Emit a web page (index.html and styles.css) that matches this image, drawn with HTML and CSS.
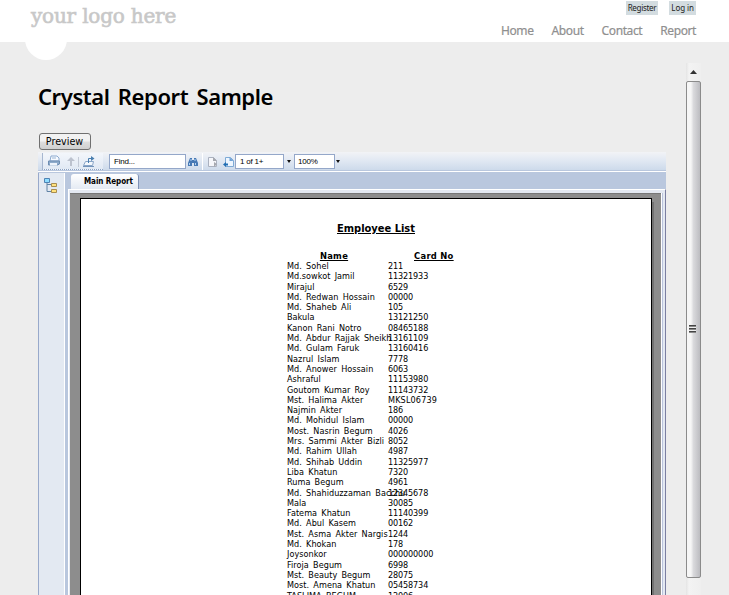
FILE: index.html
```
<!DOCTYPE html>
<html lang="en">
<head>
<meta charset="utf-8">
<title>Crystal Report Sample</title>
<link rel="stylesheet" href="styles.css">
</head>
<body>
<header class="header">
  <div class="logo">your logo here</div>
  <div class="header-right">
    <div class="login"><a>Register</a><a>Log in</a></div>
    <nav class="nav"><a>Home</a><a>About</a><a>Contact</a><a>Report</a></nav>
  </div>
  <span class="bump"></span>
</header>
<div class="content">
  <main class="main">
    <h1 class="title"><span>Crystal Report Sample</span></h1>
    <button class="preview">Preview</button>
    <section class="viewer">
      <div class="toolbar">
        <div class="tools">
          <svg width="60" height="17" viewBox="0 0 60 17">
            <path d="M8 3h6l2 2v3H7z" fill="#f7faff" stroke="#8dabd0"/>
            <path d="M9 5h4" stroke="#9bb4d2"/>
            <path d="M5.500 8h11v3l-2 1h-9z" fill="#8fabcb" stroke="#6d8db2"/>
            <path d="M7 10h7v2.500H7z" fill="#eef4fc"/>
            <path d="M24 8l4-4 4 4h-3v5h-2v-5z" fill="#bcc2ce"/>
            <path d="M35.500 4v10" stroke="#c3cad6"/>
            <path d="M40.500 12.500l2-4h8l-1 4z" fill="#f4f8fd" stroke="#8aa6c8"/>
            <path d="M40 13.500h11" stroke="#7494bb"/>
            <path d="M45.500 10V5.500h3" fill="none" stroke="#497eaf"/>
            <path d="M48 3l3.500 2.500L48 8z" fill="#497eaf"/>
          </svg>
        </div>
        <div class="field find">Find...</div>
        <svg class="binoc" width="10" height="10" viewBox="0 0 10 10">
          <path d="M2 1h2v2h2V1h2l2 5v3H6V6H4v3H0V6z" fill="#4779b4"/>
          <path d="M1.500 6v2M7.500 6v2M3 2v2M7 2v2" stroke="#b1d2f4"/>
        </svg>
        <span class="divider"></span>
        <svg class="pages" width="28" height="12" viewBox="0 0 28 12">
          <path d="M1.500 1.500h5l3 3v6h-8z" fill="#f5f6fa" stroke="#aab1bf"/>
          <path d="M6 1l4 4H6zM7 6l3 2-3 3z" fill="#a5a8af"/>
          <path d="M18.500 1.500h5l3 3v6h-8z" fill="#eef6ff" stroke="#7fabd6"/>
          <path d="M22.500 1l4 4h-4z" fill="#6fa2d6"/>
          <path d="M19 6v5l-3-2.500zM19 7.500h2v2h-2z" fill="#236fb4"/>
        </svg>
        <div class="field page-no">1 of 1+</div>
        <span class="arrow"></span>
        <div class="field zoom">100%</div>
        <span class="arrow arrow-zoom"></span>
      </div>
      <div class="panes">
        <aside class="side">
          <svg width="16" height="18" viewBox="0 0 16 18">
            <path d="M4 5v9.500h5M4 7.500h5" fill="none" stroke="#6083a5"/>
            <path d="M1.500 1.500h5v4h-5z" fill="#8edcff" stroke="#4f83b4"/>
            <path d="M8.500 6.500h5v3h-5zM8.500 12.500h5v3h-5z" fill="#ffe17e" stroke="#a88d51"/>
          </svg>
        </aside>
        <div class="doc">
          <div class="tabs"><div class="tab"><span>Main Report</span></div></div>
          <div class="frame">
            <div class="canvas">
              <div class="paper">
                <h2 class="list-title">Employee List</h2>
                <div class="heads"><b>Name</b><b>Card No</b></div>
                <div class="rows">
                  <span>Md. Sohel</span><span>211</span>
                  <span>Md.sowkot Jamil</span><span>11321933</span>
                  <span>Mirajul</span><span>6529</span>
                  <span>Md. Redwan Hossain</span><span>00000</span>
                  <span>Md. Shaheb Ali</span><span>105</span>
                  <span>Bakula</span><span>13121250</span>
                  <span>Kanon Rani Notro</span><span>08465188</span>
                  <span>Md. Abdur Rajjak Sheikh</span><span>13161109</span>
                  <span>Md. Gulam Faruk</span><span>13160416</span>
                  <span>Nazrul Islam</span><span>7778</span>
                  <span>Md. Anower Hossain</span><span>6063</span>
                  <span>Ashraful</span><span>11153980</span>
                  <span>Goutom Kumar Roy</span><span>11143732</span>
                  <span>Mst. Halima Akter</span><span>MKSL06739</span>
                  <span>Najmin Akter</span><span>186</span>
                  <span>Md. Mohidul Islam</span><span>00000</span>
                  <span>Most. Nasrin Begum</span><span>4026</span>
                  <span>Mrs. Sammi Akter Bizli</span><span>8052</span>
                  <span>Md. Rahim Ullah</span><span>4987</span>
                  <span>Md. Shihab Uddin</span><span>11325977</span>
                  <span>Liba Khatun</span><span>7320</span>
                  <span>Ruma Begum</span><span>4961</span>
                  <span>Md. Shahiduzzaman Bacchu</span><span>12345678</span>
                  <span>Mala</span><span>30085</span>
                  <span>Fatema Khatun</span><span>11140399</span>
                  <span>Md. Abul Kasem</span><span>00162</span>
                  <span>Mst. Asma Akter Nargis</span><span>1244</span>
                  <span>Md. Khokan</span><span>178</span>
                  <span>Joysonkor</span><span>000000000</span>
                  <span>Firoja Begum</span><span>6998</span>
                  <span>Mst. Beauty Begum</span><span>28075</span>
                  <span>Most. Amena Khatun</span><span>05458734</span>
                  <span>TASLIMA BEGUM</span><span>12006</span>
                </div>
              </div>
              <span class="shade"></span>
            </div>
          </div>
        </div>
      </div>
    </section>
  </main>
  <div class="scrollbar">
    <div class="up"><svg width="7" height="4" viewBox="0 0 7 4"><path d="M0 4L3.500 0 7 4z" fill="#333"/></svg></div>
    <div class="thumb"><span class="grip"></span></div>
  </div>
</div>
</body>
</html>
```
FILE: styles.css
```
* { box-sizing: border-box; }
html, body { height: 100%; }
body { margin: 0; overflow: hidden; background: #ededed; color: #000; font-family: "DejaVu Sans Condensed", "DejaVu Sans", sans-serif; display: flex; flex-direction: column; }
svg { display: block; flex: none; }

.header { position: relative; z-index: 0; flex: none; height: 42px; display: flex; justify-content: space-between; padding: 0 33px 0 31px; }
.header::before { content: ""; position: absolute; inset: 0; background: #fff; z-index: -1; }
.logo { font: 20px/32px "DejaVu Serif", serif; letter-spacing: -0.2px; color: #c8c8c8; white-space: nowrap; -webkit-text-stroke: 0.6px #c8c8c8; }
.bump { position: absolute; left: 25px; top: 18px; width: 42px; height: 42px; border-radius: 50%; background: #fff; z-index: -1; }
.header-right { display: flex; flex-direction: column; align-items: flex-end; padding-top: 1px; }
.login { display: flex; gap: 11px; }
.login a { height: 14px; padding: 0 2px; background: #d3dce0; font: 8px/14px "Noto Sans", sans-serif; color: #222; letter-spacing: -0.3px; }
.login a:last-child { letter-spacing: -0.05px; }
.nav { display: flex; gap: 18px; margin-top: 7px; font: 12px/18px "Noto Sans", sans-serif; letter-spacing: -0.4px; color: #8f8f8f; -webkit-text-stroke: 0.2px #8f8f8f; }

.content { flex: 1; min-height: 0; display: flex; }
.main { width: 686px; padding: 39px 0 0 38px; display: flex; flex-direction: column; align-items: flex-start; }
.title { margin: 0; font: 600 22px/30px "Noto Sans", sans-serif; white-space: nowrap; word-spacing: 3px; letter-spacing: -0.42px; }
.preview { margin: 22px 0 0 1px; width: 52px; height: 17px; padding: 0 1px 0 0; border: 1px solid #707070; border-radius: 3px; background: linear-gradient(#f2f2f2 0 48%, #dedede 52%, #cfcfcf); color: #000; font: 9.600px/15px "DejaVu Sans", sans-serif; }

.viewer { width: 628px; flex: 1; min-height: 0; margin-top: 2px; display: flex; flex-direction: column; }
.toolbar { flex: none; height: 19px; display: flex; align-items: center; padding-left: 4px; background: linear-gradient(#f2f3f6, #dfe7f2 50%, #cbd9ea); }
.tools { width: 61px; height: 17px; border-left: 1px solid #a7b7d0; border-bottom: 1px dotted #8ca3c4; background: linear-gradient(#f3f6fb, #e1e9f4); }
.field { height: 15px; border: 1px solid #94a7c9; background: #fff; font: 8px/14px "Liberation Sans", sans-serif; padding-left: 4px; white-space: nowrap; letter-spacing: -0.2px; }
.find { width: 77px; margin-left: 6px; }
.binoc { margin-left: 2px; }
.divider { width: 1px; height: 17px; background: #fff; margin: 0 4px; }
.page-no { width: 49px; }
.arrow { width: 0; height: 0; border: 2px solid transparent; border-top: 3px solid #111; border-bottom: 0; margin: 0 3px; }
.zoom { width: 41px; padding-left: 3px; }
.arrow-zoom { margin-left: 1px; }

.panes { flex: 1; min-height: 0; display: flex; border-top: 1px solid #fff; background: #b9c7de; box-shadow: 0 -1px #b9c7de; }
.side { width: 27px; margin-top: 1px; padding: 4px 0 0 4px; background: #e3e9f2; border: solid #fff; border-width: 0 1px 0 0; border-left: 1px solid #98a9cb; }
.doc { flex: 1; margin-left: 3px; display: flex; flex-direction: column; }
.tabs { height: 17px; padding-left: 3px; }
.tab { width: 68px; height: 15px; margin-top: 2px; background: linear-gradient(#fff, #e4eaf3); border-right: 1px solid #7f91b7; border-radius: 3px 3px 0 0; font: bold 8px/15px "DejaVu Sans Condensed", sans-serif; padding-left: 13px; white-space: nowrap; letter-spacing: -0.06px; }
.frame { flex: 1; min-height: 0; border: solid #fff; border-width: 1px 0 0 1px; background: #e4e9f2; padding: 3px 0 0 1px; display: flex; border-right: 1px solid #7b7fa2; }
.canvas { flex: 1; display: flex; background: #8d8d8d; border-top: 1px solid #777; padding: 4px 0 0 10px; margin-right: 4px; box-shadow: 1px 0 #fff, 2px 0 #b9c3dc; }
.paper { width: 572px; border: 1px solid #000; border-bottom: 0; background: #fff; padding-left: 206px; overflow: hidden; }
.shade { width: 2px; margin-top: 4px; background: #727272; }
.list-title { margin: 22px 0 0 50px; font: bold 11px/15px "DejaVu Sans Condensed", sans-serif; text-decoration: underline; white-space: nowrap; }
.heads { display: flex; margin-top: 14px; font-size: 9.300px; line-height: 12px; white-space: nowrap; text-decoration: underline; letter-spacing: 0.3px; }
.heads b:first-child { width: 94px; text-align: center; }
.heads b:last-child { margin-left: 33px; }
.rows { display: grid; margin-top: -1px; grid-template-columns: 101px auto; grid-auto-rows: 10.300px; font-size: 9px; line-height: 10px; white-space: nowrap; letter-spacing: -0.130px; }
.rows span:nth-child(odd) { letter-spacing: 0.05px; word-spacing: 1.6px; }
.rows span:nth-child(28) { letter-spacing: 0.15px; }

.scrollbar { width: 15px; margin-top: 21px; background: linear-gradient(90deg, #e4e4e4, #f3f3f3 20%, #efefef); }
.up { height: 18px; display: flex; align-items: center; justify-content: center; }
.thumb { height: 497px; border: 1px solid #8b8b8b; border-radius: 2px; background: linear-gradient(90deg, #f6f6f6 30%, #d9d9dc 50%, #bcbcc0); display: flex; align-items: center; justify-content: center; }
.grip { width: 7px; height: 8px; margin: -2px 2px 0 0; background: repeating-linear-gradient(#444 0 1px, #888 1px 2px, #eee 2px 3px); }
```
